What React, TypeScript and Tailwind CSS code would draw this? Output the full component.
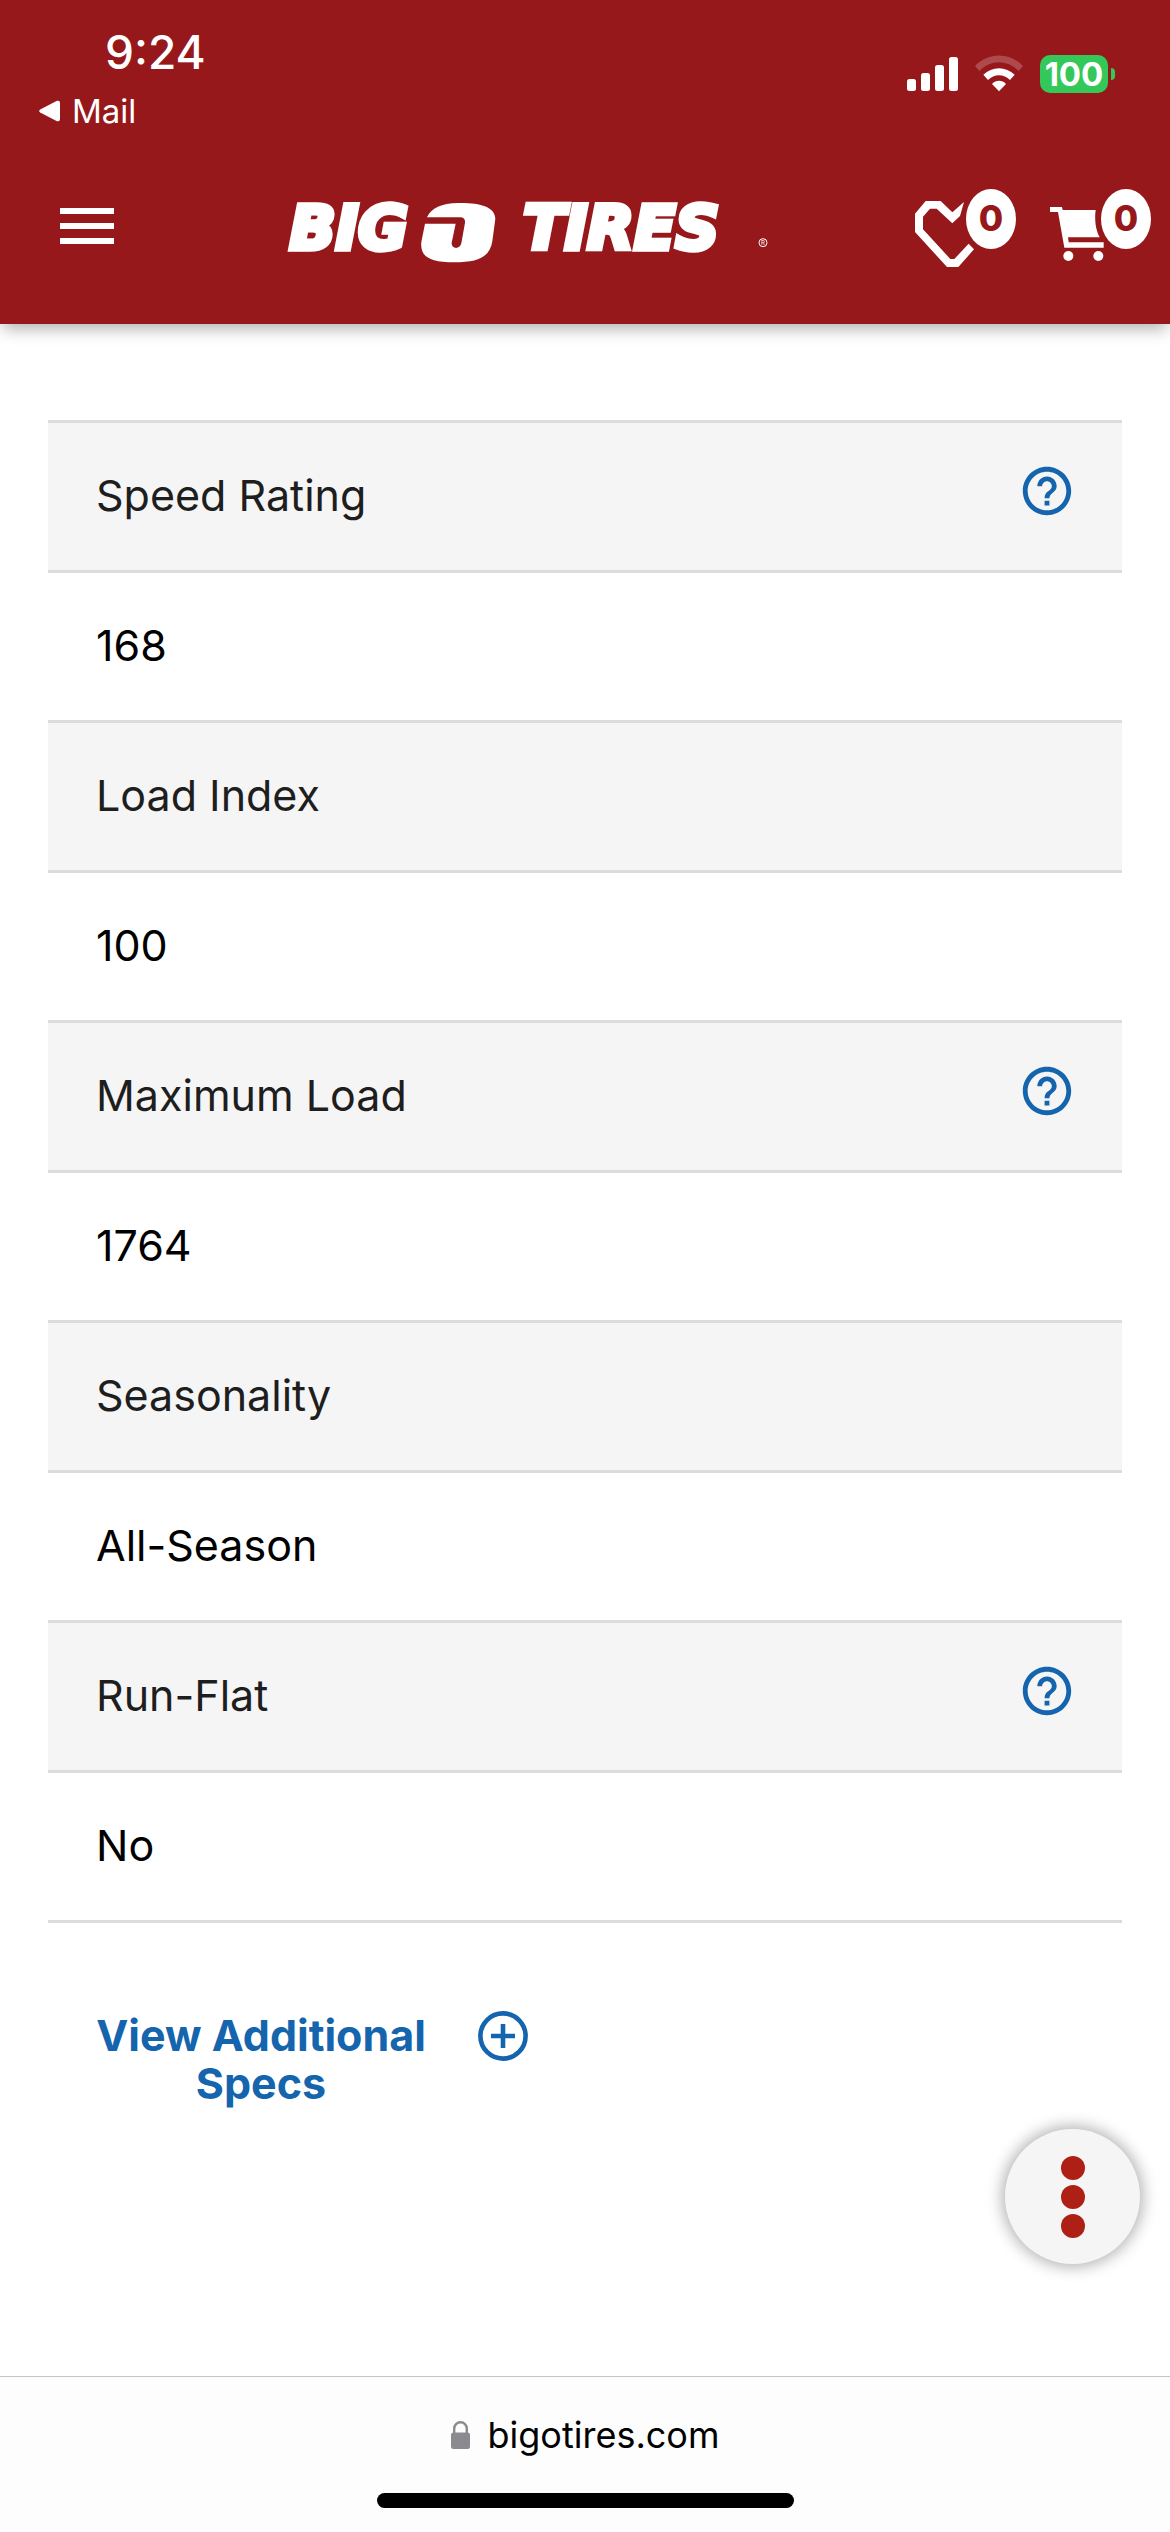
import { useState } from "react";
import { MdHelpOutline } from "react-icons/md";

interface Spec {
  label: string;
  value: string;
  help?: boolean;
}

const specs: Spec[] = [
  { label: "Speed Rating", value: "168", help: true },
  { label: "Load Index", value: "100" },
  { label: "Maximum Load", value: "1764", help: true },
  { label: "Seasonality", value: "All-Season" },
  { label: "Run-Flat", value: "No", help: true },
];

function StatusBar() {
  return (
    <div className="flex justify-between items-start pt-7 pb-[19px] pl-[39px] pr-[55px]">
      <div>
        <div className="pl-[66px] text-[46px] leading-[48px] font-medium">9:24</div>
        <a href="#mail" className="mt-[15px] flex items-center gap-3 text-[33px] leading-10">
          <svg width="21" height="22" viewBox="0 0 21 22" fill="currentColor" aria-hidden="true">
            <path d="M1.2 9.4 18 .8Q21 0 21 3V19Q21 22 18 21.2L1.2 12.6Q-.8 11 1.2 9.4Z" />
          </svg>
          Mail
        </a>
      </div>
      <div className="mt-[27px] flex items-center gap-[17px]">
        <svg width="51" height="38" viewBox="0 0 51 38" fill="currentColor" aria-hidden="true">
          <rect x="0" y="24" width="9" height="12" rx="2.5" />
          <rect x="14" y="18" width="9" height="18" rx="2.5" />
          <rect x="28" y="10" width="9" height="26" rx="2.5" />
          <rect x="42" y="2" width="9" height="34" rx="2.5" />
        </svg>
        <svg width="48" height="38" viewBox="0 0 144 114" fill="currentColor" aria-hidden="true">
          <path opacity=".22" d="M0 33C40-9 104-9 144 33L131 48C98 13 46 13 13 48Z" />
          <path d="M25 59C51 33 93 33 119 59L105 75C87 56 57 56 39 75Z" />
          <path d="M51 87C63 74 81 74 93 87L72 109Z" />
        </svg>
        <div className="flex items-center gap-[3px]">
          <div className="flex h-[38px] w-[68px] items-center justify-center rounded-[10px] bg-[#34c759] text-[33px] leading-[38px] font-bold">
            100
          </div>
          <div className="h-3 w-1 rounded-r-full bg-[#34c759]" />
        </div>
      </div>
    </div>
  );
}

function Logo() {
  return (
    <svg
      width="506"
      height="78"
      viewBox="66 27 1518 234"
      fill="currentColor"
      stroke="currentColor"
      role="img"
      aria-label="Big O Tires"
    >
      <g
        className="font-['DejaVu_Sans',sans-serif]"
        fontSize="182"
        fontWeight="700"
        fontStyle="italic"
        strokeWidth="16"
      >
        <text x="504" y="206" textAnchor="end">
          BIG
        </text>
        <text x="850" y="206">
          TIRES
        </text>
      </g>
      <path
        stroke="none"
        d="M561 112C574 84 604 70 655 69C720 68 765 80 766 116L757 184C750 230 716 247 643 247C562 247 540 226 544 186L555 131H647L635 188C633 208 660 209 664 190L675 128C676 118 671 112 661 112Z"
      />
      <circle cx="1569" cy="188" r="12" fill="none" strokeWidth="3" />
      <text x="1569" y="195" fontSize="18" textAnchor="middle" stroke="none">
        R
      </text>
    </svg>
  );
}

function Badge({ cx }: { cx: number }) {
  return (
    <>
      <ellipse cx={cx} cy="147" rx="75" ry="90" />
      <text x={cx} y="184" className="fill-[#96181b]" fontSize="106" fontWeight="800" textAnchor="middle">
        0
      </text>
    </>
  );
}

export default function App() {
  const [open, setOpen] = useState(false);

  return (
    <div className="flex min-h-screen flex-col bg-white font-['Inter',sans-serif]">
      <header className="bg-[#96181b] pb-[18px] text-white shadow-[0_8px_15px_-3px_rgba(0,0,0,0.3)]">
        <StatusBar />
        <nav className="flex h-[156px] items-center justify-between pl-[60px] pr-[19px]">
          <button aria-label="Menu">
            <svg width="54" height="78" viewBox="0 0 54 78" fill="currentColor">
              <path d="M0 19H54V25H0ZM0 34H54V40H0ZM0 49H54V55H0Z" />
            </svg>
          </button>
          <a href="#home">
            <Logo />
          </a>
          <div className="flex gap-[34px]">
            <button aria-label="Favorites">
              <svg width="101" height="78" viewBox="75 57 303 234" fill="currentColor">
                <path d="M75 131 107 93H152L187 127 222 96 210 138 187 160 140 116H120L99 140V178L181 267H193L236 221 252 238 205 291H171L75 186Z" />
                <Badge cx={303} />
              </svg>
            </button>
            <button aria-label="Cart">
              <svg width="101" height="78" viewBox="480 57 303 234" fill="currentColor">
                <path d="M480 111H516L518 120H617C613 150 617 180 629 202H534L536 217H641V233H523L504 126H480Z" />
                <circle cx="535" cy="258" r="15" />
                <circle cx="625" cy="258" r="15" />
                <Badge cx={708} />
              </svg>
            </button>
          </div>
        </nav>
      </header>

      <main className="flex-1 px-12 pt-24">
        <table className="w-full border-separate border-spacing-0 border-t-3 border-[#dcdcdc] text-left text-[43px] leading-[48px]">
          {specs.map((s) => (
            <tbody key={s.label}>
              <tr>
                <th
                  scope="row"
                  className="h-[150px] border-b-3 border-[#dcdcdc] bg-[#f5f5f5] pb-1 pl-12 pr-[46px] font-normal text-[#1e1e1e]"
                >
                  <div className="flex items-center justify-between">
                    {s.label}
                    {s.help && (
                      <button aria-label={`About ${s.label}`} className="pb-2 text-[#1464ae]">
                        <MdHelpOutline size={58} />
                      </button>
                    )}
                  </div>
                </th>
              </tr>
              <tr>
                <td className="h-[150px] border-b-3 border-[#dcdcdc] px-12 pb-1 text-black">{s.value}</td>
              </tr>
            </tbody>
          ))}
        </table>

        <button
          onClick={() => setOpen(!open)}
          aria-expanded={open}
          className="mt-[88px] ml-9 flex items-start gap-10 text-[43px] leading-[48px] font-bold text-[#1464ae]"
        >
          <span className="w-[354px] text-center">View Additional Specs</span>
          <svg width="50" height="50" viewBox="0 0 50 50" fill="none" stroke="currentColor" aria-hidden="true">
            <circle cx="25" cy="25" r="22.6" strokeWidth="4.6" />
            <path d="M13 25H37M25 13V37" strokeWidth="4.6" />
          </svg>
        </button>
      </main>

      <button
        aria-label="More options"
        className="fixed right-[30px] bottom-[268px] flex size-[135px] flex-col items-center justify-center gap-[5px] rounded-full bg-[#f5f5f5] shadow-[0_0_15px_3px_rgba(0,0,0,0.3)]"
      >
        <span className="size-6 rounded-full bg-[#ae2015]" />
        <span className="size-6 rounded-full bg-[#ae2015]" />
        <span className="size-6 rounded-full bg-[#ae2015]" />
      </button>

      <footer className="flex flex-col items-center border-t border-[#c4c4c4] bg-[#fdfdfd] pt-9 pb-6">
        <a href="#address" className="flex items-center gap-[18px] text-[36px] leading-[44px] text-black">
          <svg width="19" height="28" viewBox="0 0 19 28" aria-hidden="true">
            <path d="M3.2 13V7.5a6.3 6.3 0 0 1 12.6 0V13" fill="none" stroke="#8a8a8f" strokeWidth="2.4" />
            <rect y="11.5" width="19" height="16.5" rx="2.5" fill="#8a8a8f" />
          </svg>
          bigotires.com
        </a>
        <div className="mt-9 h-[15px] w-[417px] rounded-full bg-black" />
      </footer>
    </div>
  );
}
